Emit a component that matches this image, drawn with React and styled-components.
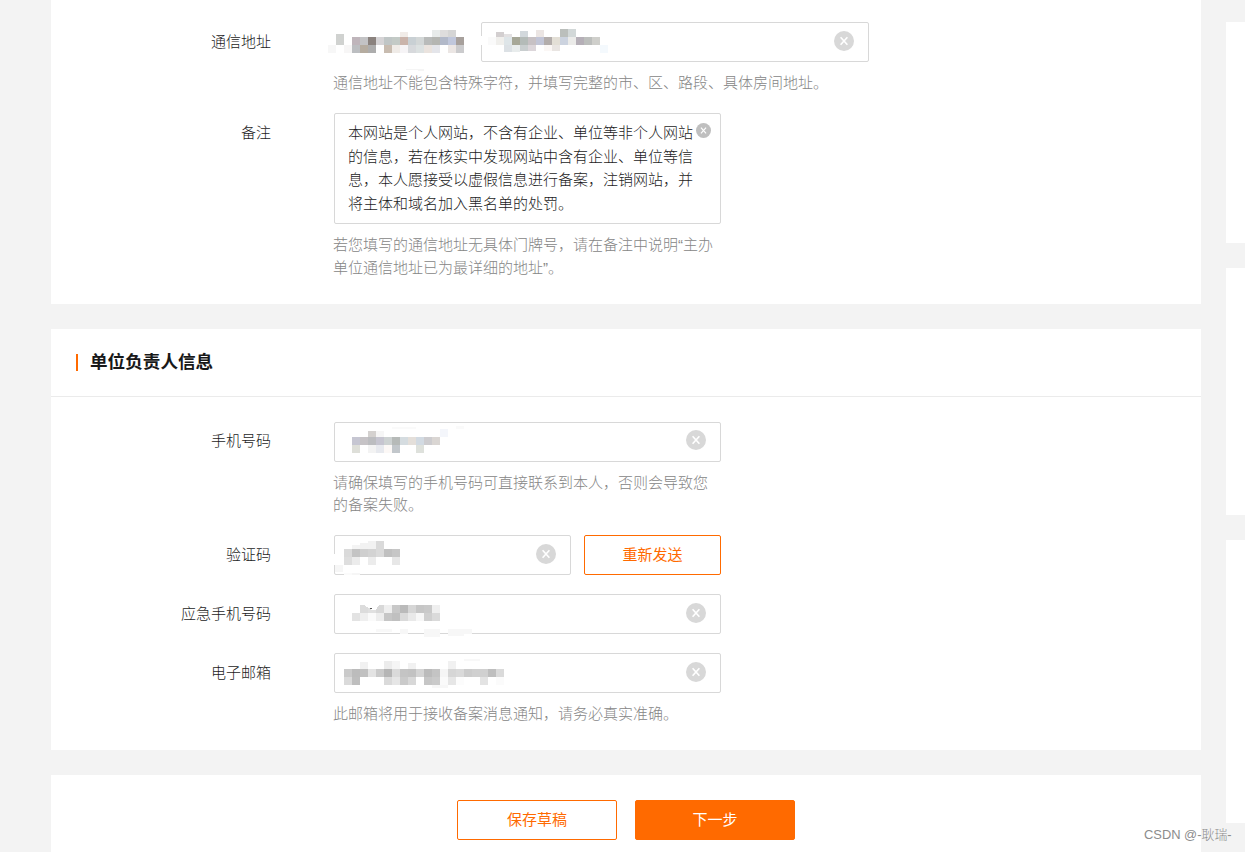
import React from "react";
import styled, { createGlobalStyle } from "styled-components";

const GlobalStyle = createGlobalStyle`
  body {
    margin: 0;
    background-color: #f3f3f3;
    font-family: "Liberation Sans", "Noto Sans CJK SC", sans-serif;
    font-size: 15px;
    font-weight: 300;
    color: #1c1c1c;
    overflow: hidden;
  }
`;

const Page = styled.div`
  display: flex;
  gap: 25px;
  box-sizing: border-box;
  width: 1245px;
  height: 852px;
  padding-left: 51px;
  overflow: hidden;
`;

const Main = styled.main`
  display: flex;
  flex-direction: column;
  flex: 0 0 1150px;
  gap: 25px;
`;

const Card = styled.section`
  flex: none;
  background-color: white;
`;

const Aside = styled.aside`
  display: flex;
  flex-direction: column;
  flex: 1;
  gap: 25px;
  padding-top: 22px;
`;

const AsideCard = styled.div`
  flex: none;
  height: ${(props) => props.$height}px;
  background-color: white;
`;

const CardHeader = styled.div`
  display: flex;
  align-items: center;
  box-sizing: border-box;
  height: 68px;
  padding-left: 25px;
  border-bottom: 1px solid #ebebeb;
`;

const Mark = styled.span`
  width: 2px;
  height: 17px;
  margin-right: 12px;
  background-color: #ff6a00;
`;

const CardTitle = styled.h2`
  margin: 0;
  padding-bottom: 2px;
  font-size: 17.6px;
  line-height: 26px;
  font-weight: 700;
  color: #181818;
`;

const Form = styled.div`
  display: flex;
  flex-direction: column;
  gap: 19px;
  padding: ${(props) => props.$top}px 0 25px;
`;

const Row = styled.div`
  display: flex;
  align-items: flex-start;
`;

const Label = styled.label`
  flex: 0 0 220px;
  margin-right: 63px;
  line-height: ${(props) => props.$line || 40}px;
  text-align: right;
`;

const Controls = styled.div`
  display: flex;
  gap: 13px;
`;

const Region = styled.div`
  position: relative;
  width: 134px;
  height: 40px;
`;

const Field = styled.div`
  position: relative;
  display: flex;
  align-items: center;
  justify-content: flex-end;
  box-sizing: border-box;
  width: ${(props) => props.$width || 387}px;
  height: 40px;
  padding: 0 14px ${(props) => props.$bottom || 2}px 0;
  border: 1px solid #d8d8d8;
  border-radius: 2px;
`;

const TextArea = styled.div`
  display: flex;
  box-sizing: border-box;
  width: 387px;
  height: 111px;
  padding: 7px 0 0 13px;
  border: 1px solid #d8d8d8;
  border-radius: 2px;
  line-height: 23.6px;

  svg {
    margin: 2px 0 0 3px;
  }
`;

const Hint = styled.p`
  margin: 10px 0 0 -1px;
  line-height: ${(props) => props.$line || 22}px;
  white-space: nowrap;
  color: #868686;
`;

const Button = styled.button`
  box-sizing: border-box;
  width: ${(props) => props.$width}px;
  height: 40px;
  padding: 0 0 3px;
  border: 1px solid #ff6a00;
  border-radius: 2px;
  background-color: ${(props) => (props.$primary ? "#ff6a00" : "white")};
  color: ${(props) => (props.$primary ? "white" : "#ff6a00")};
  font: inherit;
  font-weight: 400;
`;

const Footer = styled.div`
  display: flex;
  justify-content: center;
  gap: 18px;
  padding: 25px 0;
`;

const Watermark = styled.div`
  position: absolute;
  top: 825px;
  left: 1144px;
  font-size: 12.9px;
  line-height: 20px;
  white-space: nowrap;
  color: #8c8c8c;
`;

const MosaicSvg = styled.svg`
  position: absolute;
  top: ${(props) => props.$top}px;
  left: ${(props) => props.$left}px;
  overflow: visible;
`;

// each strip is [x, y, height, colours of 8px cells], "-" leaves a gap
const regionMask = [
  [8, 5, 3, "d0d2d0"],
  [72, 3, 5, "f1ece8"],
  [104, 1, 7, "e8ebea dedddd d5d5d5"],
  [8, 8, 8, "d0d2d0 - bfb5bb c3c3c5 8a827e d6d4d6 c0c6c6 c3cac6 cab4ab c9d0d4 d3d7d7 b9bbba b5b6b2 b2b9c9 c0c7dc a7a09c"],
  [0, 16, 8, "f7f7f7 - f7f6f6 bcbec1 b5aca0 adadad - c8bcb0 efebe7 f6f4f6 d7d9dc dce1e1 eae3de e4e5ea - ebe6e4 cbcbcd"],
];

const addressMask = [
  [0, 7, 9, "ffffff"],
  [8, 8, 8, "fafafa"],
  [16, 3, 5, "d3cfd0"],
  [24, 5, 3, "e3e1e2"],
  [40, 2, 6, "d2d8dc"],
  [56, 1, 7, "ebe5e3"],
  [80, 0, 8, "bbbfbc d2d8d8"],
  [16, 8, 8, "f0efec dee5e8 a6a797 b4bbb8 c7c1c4 c2c5d6 b3adab e3dfd6 ccd3df ebebe9 b5afb7 bcbebc cfcfcb"],
  [24, 16, 7, "dce1e5 e8ecec"],
  [40, 16, 6, "c9cecf dcd6da - fbf7f5 e9e5e2"],
  [120, 16, 8, "f4f9fd"],
];

const phoneMask = [
  [104, 0, 3, "fafafa"],
  [40, 1, 2, "fafafa fafafa fafafa"],
  [16, 5, 6, "d4d1cf f6f6f6"],
  [88, 3, 8, "f4f6fb"],
  [0, 11, 8, "c6c6d2 c6c3c6 bcbdc0 c6c5d0 cdd2d2 b6bab8 d5dce0 e4dfda d2dae2 cdcccf dad6d3"],
  [0, 19, 8, "dedfd9 - f3f3f3 e7e9ee fcf8f6 c2c7cb - - dee1dc"],
];

const codeMask = [
  [-10, 13, 11, "ffffff"],
  [-9, 24, 7, "f6f6f6"],
  [8, 4, 4, "f4f4f4"],
  [16, 2, 6, "f2f2f2"],
  [24, 0, 8, "f2f2f2 dadada"],
  [0, 8, 8, "dadada c4c4c4 cfcfcf d3d3d3 dadada c0c0c0 c6c6c6"],
  [0, 16, 8, "dedede ececec - ececec - - e7e7e7"],
  [0, 32, 2, "fbfbfb f6f6f6"],
];

const urgentMask = [
  [8, 0, 8, "dcdcdc e0e0e0 d8d8d8 efefef c8c8c8 bababa d6d6d6 c6c6c6 c9c9c9 efefef"],
  [0, 8, 8, "e3e3e3 efefef fafafa ededed c6c6c6 c0c0c0 dadada e9e9e9 f7f7f7 cfcfcf dadada"],
  [24, 24, 3, "f8f8f8 f8f8f8"],
  [48, 24, 5, "f7f7f7"],
  [72, 24, 8, "f7f7f7 f7f7f7"],
  [96, 24, 7, "f7f7f7 f7f7f7"],
  [112, 24, 5, "f7f7f7"],
];

const mailMask = [
  [16, 1, 7, "f1f1f1"],
  [40, 0, 8, "ececec f5f5f5"],
  [64, 2, 6, "f1f1f1"],
  [104, 0, 8, "f1f1f1"],
  [120, -2, 2, "f8f8f8 f8f8f8"],
  [0, 8, 8, "cacaca bcbcbc c0c0c0 e3e3e3 cacaca b5b5b5 dadada c4c4c4 c2c2c2 d4d4d4 bbbbbb c4c4c4 f5f5f5 d6d6d6 dadada cccccc d0d0d0 d0d0d0 bebebe dadada"],
  [0, 16, 8, "dadada bebebe - - - dadada e6e6e6 cacaca d8d8d8 - c6c6c6 cacaca fafafa e6e6e6 fcfcfc - - e3e3e3 - fbfbfb"],
  [88, 24, 3, "f7f7f7 f7f7f7"],
];

function Mosaic({ strips, top, left, children }) {
  return (
    <MosaicSvg $top={top} $left={left} width="160" height="32" shapeRendering="crispEdges">
      {strips.map(([x, y, height, colors]) =>
        colors.split(" ").map((color, i) =>
          color === "-" ? null : (
            <rect
              key={`${x}-${y}-${i}`}
              x={x + i * 8}
              y={y}
              width="8"
              height={height}
              fill={`#${color}`}
            />
          )
        )
      )}
      {children}
    </MosaicSvg>
  );
}

const IconSvg = styled.svg`
  flex: none;
`;

function ClearIcon({ size = 20, color = "#d8d8d8" }) {
  return (
    <IconSvg width={size} height={size} viewBox="0 0 20 20">
      <circle cx="10" cy="10" r="10" fill={color} />
      <path d="M6.6 6.2 13.4 13.8M13.4 6.2 6.6 13.8" stroke="white" strokeWidth="1.6" />
    </IconSvg>
  );
}

function App() {
  return (
    <Page lang="zh-CN">
      <GlobalStyle />
      <Main>
        <Card>
          <Form $top={22}>
            <Row>
              <Label>通信地址</Label>
              <div>
                <Controls>
                  <Region>
                    <Mosaic strips={regionMask} top={7} left={-6}>
                      <path d="M72 40h24v2z" fill="#f5f5f5" />
                    </Mosaic>
                  </Region>
                  <Field $width={388}>
                    <Mosaic strips={addressMask} top={6} left={-2} />
                    <ClearIcon />
                  </Field>
                </Controls>
                <Hint>通信地址不能包含特殊字符，并填写完整的市、区、路段、具体房间地址。</Hint>
              </div>
            </Row>
            <Row>
              <Label>备注</Label>
              <div>
                <TextArea>
                  <div>
                    本网站是个人网站，不含有企业、单位等非个人网站
                    <br />
                    的信息，若在核实中发现网站中含有企业、单位等信
                    <br />
                    息，本人愿接受以虚假信息进行备案，注销网站，并
                    <br />
                    将主体和域名加入黑名单的处罚。
                  </div>
                  <ClearIcon size={15} color="#bfbfbf" />
                </TextArea>
                <Hint $line={22.5}>
                  若您填写的通信地址无具体门牌号，请在备注中说明“主办
                  <br />
                  单位通信地址已为最详细的地址”。
                </Hint>
              </div>
            </Row>
          </Form>
        </Card>

        <Card>
          <CardHeader>
            <Mark />
            <CardTitle>单位负责人信息</CardTitle>
          </CardHeader>
          <Form $top={25}>
            <Row>
              <Label $line={38}>手机号码</Label>
              <div>
                <Field $bottom={4}>
                  <Mosaic strips={phoneMask} top={3} left={17} />
                  <ClearIcon />
                </Field>
                <Hint>
                  请确保填写的手机号码可直接联系到本人，否则会导致您
                  <br />
                  的备案失败。
                </Hint>
              </div>
            </Row>
            <Row>
              <Label>验证码</Label>
              <Controls>
                <Field $width={237}>
                  <Mosaic strips={codeMask} top={5} left={9} />
                  <ClearIcon />
                </Field>
                <Button $width={137}>重新发送</Button>
              </Controls>
            </Row>
            <Row>
              <Label>应急手机号码</Label>
              <Field>
                <Mosaic strips={urgentMask} top={10} left={17}>
                  <path d="M12 0h15l-3 5h-4z" fill="white" />
                  <path d="M18 3h2v1h-2z" fill="#555555" />
                </Mosaic>
                <ClearIcon />
              </Field>
            </Row>
            <Row>
              <Label>电子邮箱</Label>
              <div>
                <Field>
                  <Mosaic strips={mailMask} top={7} left={9} />
                  <ClearIcon />
                </Field>
                <Hint>此邮箱将用于接收备案消息通知，请务必真实准确。</Hint>
              </div>
            </Row>
          </Form>
        </Card>

        <Card>
          <Footer>
            <Button $width={160}>保存草稿</Button>
            <Button $width={160} $primary>
              下一步
            </Button>
          </Footer>
        </Card>
      </Main>

      <Aside>
        <AsideCard $height={221} />
        <AsideCard $height={247} />
        <AsideCard $height={283} />
      </Aside>
      <Watermark>CSDN @-耿瑞-</Watermark>
    </Page>
  );
}

export default App;
